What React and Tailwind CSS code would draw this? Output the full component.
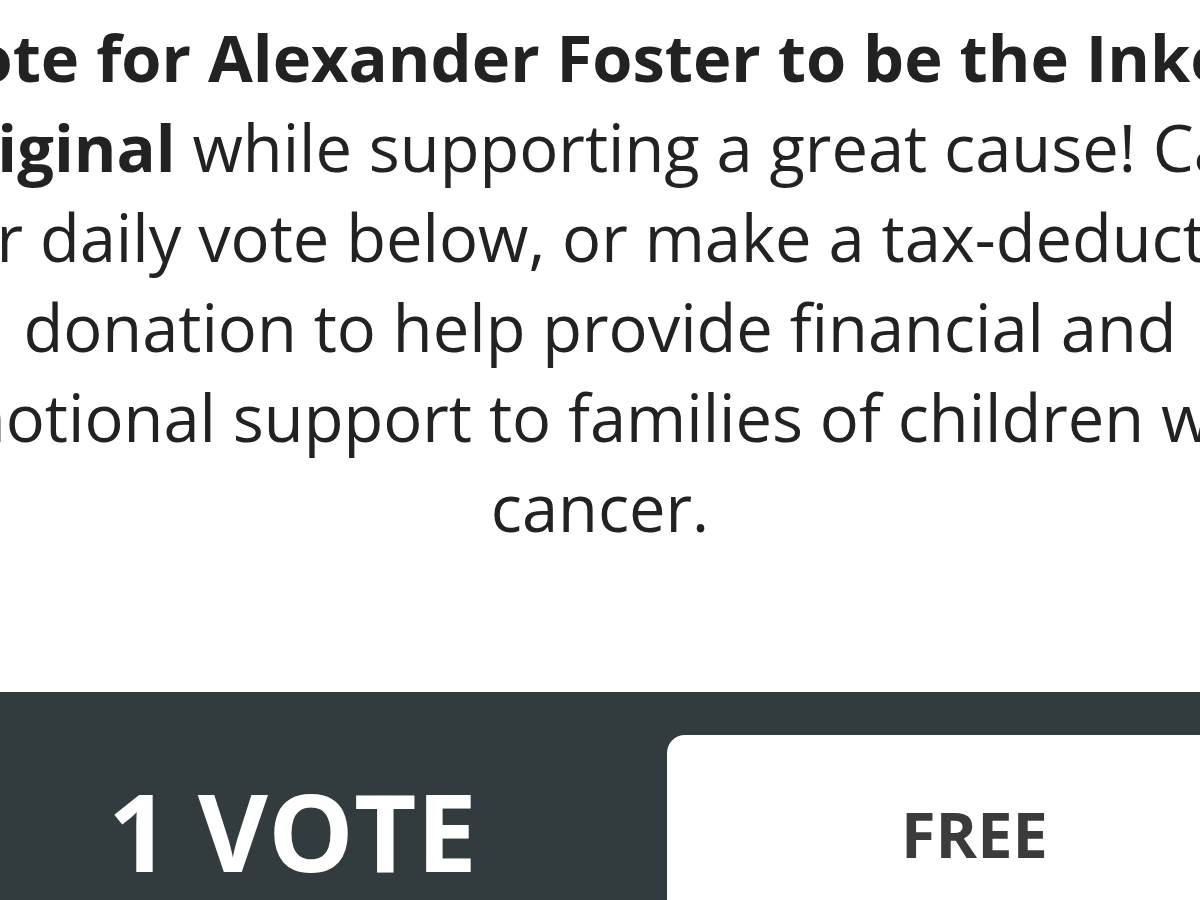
import React from "react";

const App = () => {
  return (
    <div className="w-full h-[900px] overflow-hidden bg-white font-['Open_Sans',sans-serif]">
      {/* intro text, wider than the viewport and centred on it */}
      <div className="h-[692px] pt-[12px] flex flex-col items-center">
        <p className="whitespace-nowrap text-center text-[65px] leading-[90px] text-[#222222]">
          <strong className="font-bold">
            Vote for Alexander Foster to be the Inked
            <br />
            Original
          </strong>{" "}
          while supporting a great cause! Cast
          <br />
          your daily vote below, or make a tax-deductible
          <br />
          donation to help provide financial and
          <br />
          emotional support to families of children with
          <br />
          cancer.
        </p>
      </div>

      {/* vote options */}
      <div className="bg-[#323c3e] pt-[43px] flex h-[208px]">
        <div className="w-[667px] pt-[42px] pl-[108px]">
          <div className="text-[108px] leading-none font-bold text-white whitespace-nowrap">
            1 VOTE
          </div>
        </div>
        <div className="flex-1 bg-white rounded-tl-[18px] pt-[67px] pl-[234px]">
          <div className="text-[63px] leading-none font-bold text-[#3b3b3b]">
            FREE
          </div>
        </div>
      </div>
    </div>
  );
};

export default App;
